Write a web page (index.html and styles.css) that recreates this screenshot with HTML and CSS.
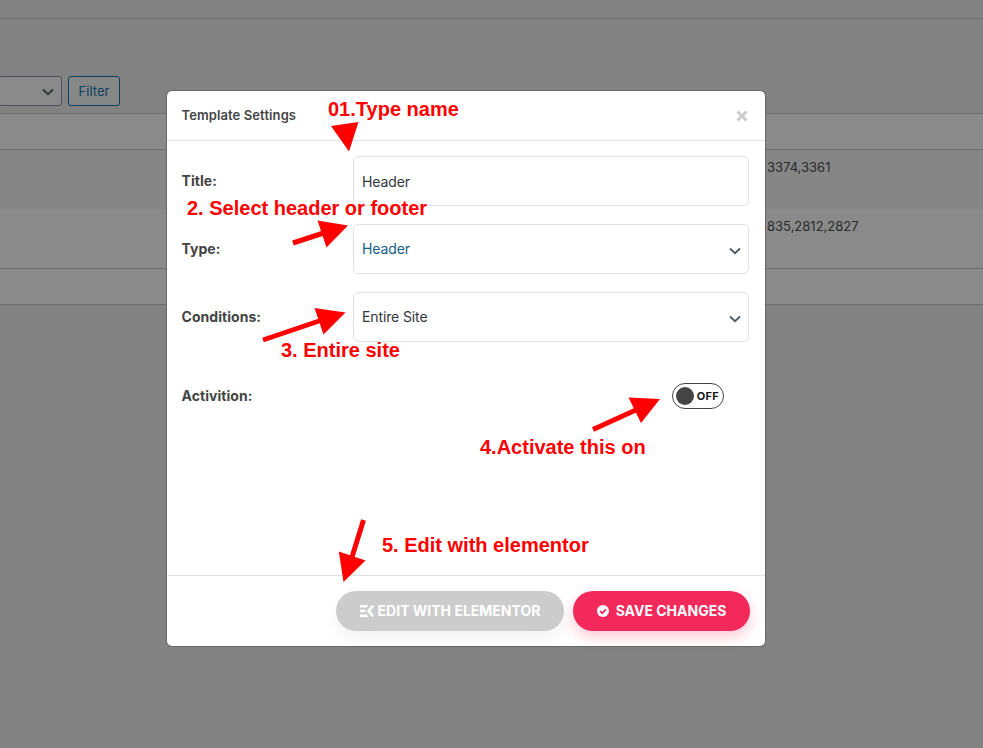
FILE: index.html
```
<!DOCTYPE html>
<html lang="en">
<head>
<meta charset="utf-8">
<title>Template Settings</title>
<link rel="stylesheet" href="styles.css">
</head>
<body>
<div class="page">
  <div class="topbar"></div>
  <div class="filters">
    <div class="bulk-select"><svg class="chevron" viewBox="0 0 12 8"><path d="M1 1.5 6 6.2 11 1.5"/></svg></div>
    <button class="filter-btn">Filter</button>
  </div>
  <div class="table">
    <div class="row head"></div>
    <div class="row item alt">3374,3361</div>
    <div class="row item">835,2812,2827</div>
    <div class="row foot"></div>
  </div>
</div>

<div class="modal">
  <header class="modal-head">
    <h2>Template Settings</h2>
    <svg class="close" viewBox="0 0 12 12"><path d="M1.5 1.5 10.500 10.500M10.500 1.500 1.500 10.500"/></svg>
  </header>
  <div class="modal-body">
    <div class="field"><label>Title:</label><div class="control text"><span>Header</span></div></div>
    <div class="field"><label>Type:</label><div class="control active"><span>Header</span><svg class="chevron" viewBox="0 0 12 8"><path d="M1 1.5 6 6.2 11 1.5"/></svg></div></div>
    <div class="field"><label>Conditions:</label><div class="control"><span>Entire Site</span><svg class="chevron" viewBox="0 0 12 8"><path d="M1 1.5 6 6.2 11 1.5"/></svg></div></div>
    <div class="field switch-row"><label>Activition:</label><div class="switch"><i></i><span>OFF</span></div></div>
  </div>
  <footer class="modal-foot">
    <button class="btn edit">
      <svg class="ek" viewBox="0 0 14 12"><path d="M0 0H8.300L6.800 2.400H0zM0 4.800H5.500V7.200H0zM0 9.600H6.800L8.300 12H0z"/><path class="angle" d="M13.200 .7 8.500 6 13.200 11.300"/></svg>
      <span>EDIT WITH ELEMENTOR</span>
    </button>
    <button class="btn save">
      <svg class="check" viewBox="0 0 12 12"><circle cx="6" cy="6" r="6"/><path d="M3 6.1 5.2 8.2 9.1 4.3"/></svg>
      <span>SAVE CHANGES</span>
    </button>
  </footer>
</div>

<div class="notes">
  <svg class="arrows" viewBox="0 0 983 748">
    <path class="tip" d="M331 126 358.500 122 349 151.500zM317.500 220.500 348 225.500 326.500 247.500zM314.500 308 345.500 312.500 323.500 334.500zM628.500 397.500 660 399 641 423zM338.800 551.500 365.500 560.500 343.500 582z"/>
    <path class="shaft" d="M293 243 325 232.500M263 340 322 320M593 429.500 638 409M363.500 520 352 557"/>
  </svg>
  <span class="note n1">01.Type name</span>
  <span class="note n2">2. Select header or footer</span>
  <span class="note n3">3. Entire site</span>
  <span class="note n4">4.Activate this on</span>
  <span class="note n5">5. Edit with elementor</span>
</div>
</body>
</html>
```
FILE: styles.css
```
* { box-sizing: border-box; }
body {
  margin: 0;
  width: 983px;
  height: 748px;
  overflow: hidden;
  background: #828282;
  font-family: Inter, sans-serif;
  color: #3c4043;
}
button { font-family: inherit; margin: 0; }
.topbar { height: 19px; border-bottom: 1px solid #6c6c6c; }
.filters { display: flex; gap: 6px; padding-top: 57px; height: 94px; }
.bulk-select {
  width: 64px; height: 30px; margin-left: -2px;
  display: flex; align-items: center; justify-content: flex-end; padding: 2px 7px 0 0;
  border: 1px solid #4a5055; border-radius: 3px; background: #8a8a8a;
}
.bulk-select .chevron { stroke: #303538; }
.filter-btn {
  width: 52px; height: 30px; padding: 0;
  border: 1px solid #0b415f; border-radius: 3px; background: #868787;
  color: #0b415f; font-size: 13px;
}
.table { border: solid #6c6c6c; border-width: 1px 0; }
.row { height: 59px; background: #8a8a8a; }
.row.head { height: 36px; border-bottom: 1px solid #6c6c6c; }
.row.foot { height: 36px; border-top: 1px solid #6c6c6c; }
.row.alt { background: #868686; }
.row.item { padding: 7px 0 0 767px; font-size: 13px; line-height: 20px; color: #292b2d; }

.chevron { width: 12px; height: 8px; fill: none; stroke: #50575e; stroke-width: 1.8; }

.modal {
  position: absolute; left: 167px; top: 91px; width: 598px; height: 555px;
  display: flex; flex-direction: column;
  background: #fff; border-radius: 5px; box-shadow: 0 0 0 1px #686868;
}
.modal-head {
  height: 50px; padding: 0 17px 0 15px;
  display: flex; align-items: center; justify-content: space-between;
  border-bottom: 1px solid #dee2e6;
}
.modal-head h2 { margin: 0 0 2px -.5px; font-size: 13px; font-weight: 600; letter-spacing: .1px; color: #444; }
.close { width: 12px; height: 12px; fill: none; stroke: #ccc; stroke-width: 3; }
.modal-body { flex: 1; padding: 15px 16px 0 15px; display: flex; flex-direction: column; gap: 18px; }
.field { display: flex; align-items: center; height: 50px; }
.field label { width: 171px; padding-bottom: 2px; text-indent: -.5px; font-size: 14px; font-weight: 650; letter-spacing: .05px; color: #444; }
.control {
  flex: 1; height: 50px; padding: 0 7px 2px 8px;
  display: flex; align-items: center; justify-content: space-between;
  border: 1px solid #e1e1e1; border-radius: 5px;
  font-size: 14px; letter-spacing: -.12px; color: #32373c;
}
.control.text { padding-bottom: 0; }
.control.active { color: #135e86; }
.control .chevron { margin-top: 6px; }
.switch-row { margin-top: 11px; justify-content: space-between; padding-right: 25px; }
.switch {
  width: 52px; height: 26px; padding: 0 4px 0 3px;
  display: flex; align-items: center; justify-content: space-between;
  border: 1px solid #444; border-radius: 13px;
}
.switch i { width: 18px; height: 18px; border-radius: 50%; background: #444; }
.switch span { font-size: 11px; font-weight: 700; letter-spacing: .25px; color: #16181d; }
.modal-foot {
  height: 71px; padding: 15px 15px 0;
  display: flex; justify-content: flex-end; gap: 9px;
  border-top: 1px solid #dee2e6;
}
.btn {
  height: 40px; padding: 0; border: 0; border-radius: 20px;
  display: flex; align-items: center; justify-content: center;
  color: #fff; font-size: 14px; font-weight: 700; white-space: nowrap;
}
.btn span { padding-bottom: 2px; }
.edit { width: 228px; gap: 4px; background: #ccc; box-shadow: 0 8px 15px rgba(0, 0, 0, .05); }
.edit span { font-weight: 750; }
.save { width: 177px; gap: 7px; background: #f3285b; box-shadow: 0 6px 14px rgba(243, 40, 91, .25); }
.ek { width: 14px; height: 12px; fill: #fff; }
.angle { fill: none; stroke: #fff; stroke-width: 2.6; }
.check { width: 12px; height: 12px; fill: #fff; }
.check path { fill: none; stroke: #f3285b; stroke-width: 1.8; }

.notes { position: absolute; inset: 0; pointer-events: none; }
.arrows { position: absolute; left: 0; top: 0; width: 983px; height: 748px; }
.tip { fill: #f00; }
.shaft { fill: none; stroke: #f00; stroke-width: 5; }
.note {
  position: absolute; white-space: nowrap; color: #f00;
  font: 700 20px/24px "Liberation Sans", Arial, sans-serif;
}
.n1 { left: 328px; top: 97px; }
.n2 { left: 187px; top: 196px; }
.n3 { left: 281px; top: 338px; }
.n4 { left: 480px; top: 435px; }
.n5 { left: 382px; top: 533px; }
```
